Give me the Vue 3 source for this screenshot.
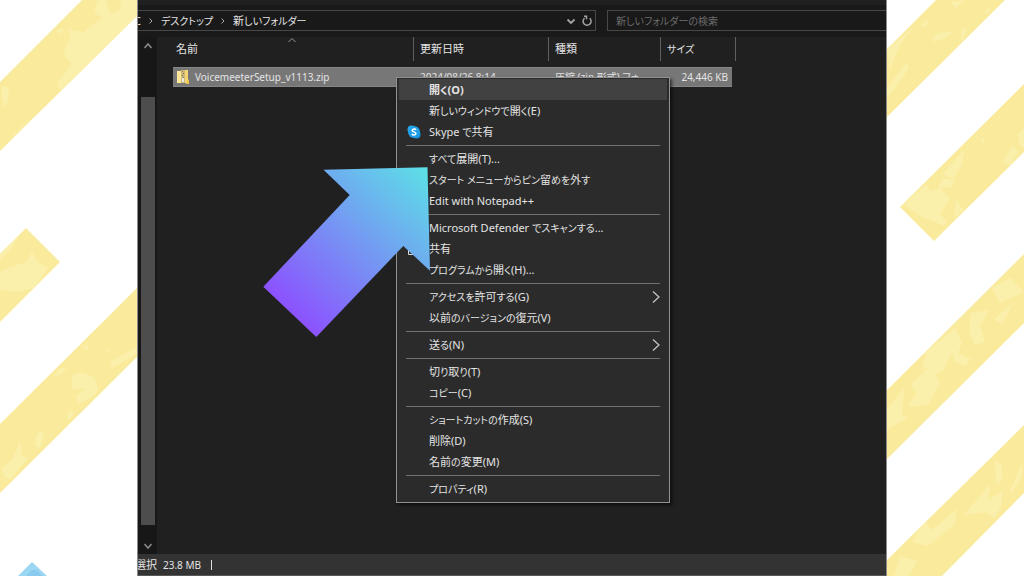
<script setup>
const crumbs = ['デスクトップ', '新しいフォルダー']
const groups = [
  [
    { label: '開く(O)', active: true },
    { label: '新しいウィンドウで開く(E)' },
    { label: 'Skype で共有', icon: 'skype' }
  ],
  [
    { label: 'すべて展開(T)...' },
    { label: 'スタート メニューからピン留めを外す' },
    { label: 'Edit with Notepad++' }
  ],
  [
    { label: 'Microsoft Defender でスキャンする...' },
    { label: '共有', icon: 'share' },
    { label: 'プログラムから開く(H)...' }
  ],
  [
    { label: 'アクセスを許可する(G)', sub: true },
    { label: '以前のバージョンの復元(V)' }
  ],
  [{ label: '送る(N)', sub: true }],
  [{ label: '切り取り(T)' }, { label: 'コピー(C)' }],
  [
    { label: 'ショートカットの作成(S)' },
    { label: '削除(D)' },
    { label: '名前の変更(M)' }
  ],
  [{ label: 'プロパティ(R)' }]
]

// Kana is set one size smaller than kanji and Latin, so labels are cut into runs.
const runs = (text) =>
  text.split(/([\u3040-\u30ff]+)/).filter(Boolean).map((t) => ({ t, kana: /^[\u3040-\u30ff]/.test(t) }))
</script>

<template>
  <div class="stage">
    <svg class="backdrop" viewBox="0 0 1024 576" preserveAspectRatio="none" aria-hidden="true">
      <defs>
        <clipPath id="stripes">
          <path d="M82 0H138V15L0 151V82Z M0 254L26 228L60 262L0 322Z M0 424L138 287V356L0 493Z" />
          <path d="M886 50L936 0H1005L886 118Z M900 207L1024 84V152L934 241Z M1024 254L886 391V460L1024 323Z M886 561L1024 425V493L942 576H886Z" />
        </clipPath>
      </defs>
      <g clip-path="url(#stripes)">
        <rect width="1024" height="576" fill="#f9eb9b" />
        <g fill="#fbefac">
          <path d="M98 0L94 12L102 18L92 25L84 32L72 30L68 27L70 38L64 50L66 58L72 64L64 75L57 82L60 90L76 78L138 18V0H121L120 10L110 14L106 0Z" />
          <path d="M2 86Q9 86 9 94Q9 103 4 107L2 96Z M55 31L63 28L62 34Z M14 134L34 116L24 130L10 142Z" />
          <path d="M7 268L26 262L32 252L38 262L48 268L34 288L18 292L0 290V272Z M0 252L20 236L10 250L0 260Z" />
          <path d="M72 376Q80 368 94 378Q102 390 92 397L78 404L76 396L86 388L72 390Z M54 376L60 368L67 368L58 376Z M105 350L111 348L108 352Z M110 362L138 346V353L112 368Z M82 344L90 347L86 351Z" />
          <path d="M2 468L12 460L20 441L22 456L28 458L10 480L4 476Z M36 438L40 430L44 435L40 448L35 446Z M70 410L74 414L69 420L67 416Z" />
          <path d="M887 50L913 27L900 45L890 70Z M887 88L907 62L909 68L898 84L886 99Z M920 28L925 20L930 21L926 26Z M932 38Q944 30 952 32Q948 38 934 42Z M950 2L964 0L956 8Z M962 28L967 30L961 43Z M984 12L991 7L988 14Z" />
          <path d="M904 205L926 184L930 191L938 189L942 178L955 180L952 187L940 188L950 199L940 214L947 221L944 226L930 220L920 216Z M943 174L964 150L962 165L953 179Z M980 138L986 140L983 144Z M1003 162L1013 145L1018 152L1010 166Z M1018 134L1024 128V148L1019 145Z M956 200L964 211L954 219Z" />
          <path d="M992 288L1010 278L1024 292L1000 303Z M970 313L989 310L980 326L985 342L975 345L970 334Z M994 319L1013 303L1002 324Z M926 352L955 328L962 343L958 353L971 359L965 366L955 362L952 352L944 370L936 374L940 383L928 405L907 407L916 394L911 384L929 367L922 370Z M886 410L904 388L902 414L908 418L886 430Z" />
          <path d="M995 460L1001 464L1003 480L996 484Z M1010 492L1022 462V477L1011 494Z M964 515L990 484L988 500L1003 491L1001 507L994 518L986 512Z M912 542L924 520L932 530L957 509L955 524L928 546Z M894 576L900 556L917 561L909 576Z" />
        </g>
      </g>
      <path d="M32 562L47 576H18Z" fill="#9bd6f3" />
      <path d="M32 570L37 570L42 576H26Z" fill="#88cbee" />
    </svg>

    <main class="window">
      <div class="topbar">
        <nav class="address" aria-label="アドレス">
          <span class="edge">C</span>
          <template v-for="c in crumbs" :key="c">
            <svg class="sep" viewBox="0 0 6 8" aria-hidden="true"><path d="M1.500 1.500L4 4L1.500 6.500" /></svg>
            <button class="crumb"><span v-for="(r, k) in runs(c)" :key="k" :class="{ kana: r.kana }">{{ r.t }}</span></button>
          </template>
          <button class="tool push" aria-label="履歴">
            <svg viewBox="0 0 12 12"><path d="M2.500 4.500L6 8L9.500 4.500" stroke-width="1.800" /></svg>
          </button>
          <button class="tool" aria-label="更新">
            <svg viewBox="0 0 12 12"><path d="M3.500 3.200A4 4 0 1 0 8.700 3.200M3 1.200H5.500V4.200" stroke-width="1.500" /></svg>
          </button>
        </nav>
        <input class="search" type="search" aria-label="検索" placeholder="新しいフォルダーの検索" />
      </div>

      <div class="body">
        <div class="rail">
          <svg viewBox="0 0 10 8" aria-hidden="true"><path d="M1.500 6L5 2L8.500 6" /></svg>
          <div class="thumb"></div>
          <svg viewBox="0 0 10 8" aria-hidden="true"><path d="M1.500 2L5 6L8.500 2" /></svg>
        </div>
        <div class="files">
          <table>
            <colgroup><col class="c1" /><col class="c2" /><col class="c3" /><col class="c4" /></colgroup>
            <thead>
              <tr>
                <th>名前
                  <svg class="sort" viewBox="0 0 10 6" aria-hidden="true"><path d="M1.500 5L5 1.500L8.500 5" /></svg>
                </th>
                <th>更新日時</th>
                <th>種類</th>
                <th><span class="kana">サイズ</span></th>
              </tr>
            </thead>
            <tbody>
              <tr>
                <td>
                  <span class="file">
                    <svg viewBox="0 0 12 14" aria-hidden="true">
                      <path d="M0 1H5L6 0H11V13H0Z" fill="#f3d673" />
                      <path d="M0 1H4V13H0Z" fill="#ffe998" />
                      <path d="M11 9L12 10V14H9Z" fill="#eec54f" />
                      <path d="M4 0H8V13H4Z" fill="#cdb876" />
                      <path d="M5 1H6V2H5ZM6 3H7V4H6ZM5 5H6V6H5ZM6 7H7V8H6Z" fill="#777" />
                      <path d="M5 8H7V12H5Z" fill="#e6e6e6" />
                    </svg>
                    VoicemeeterSetup_v1113.zip
                  </span>
                </td>
                <td>2024/08/26 8:14</td>
                <td>圧縮 (zip 形式) フォ</td>
                <td class="size">24,446 KB</td>
              </tr>
            </tbody>
          </table>
        </div>
      </div>

      <footer class="status">
        <span class="picked">選択</span>
        <span class="bytes">23.8 MB</span>
        <i class="bar"></i>
      </footer>

      <div class="menu" role="menu">
        <div v-for="(g, i) in groups" :key="i" class="group" role="group">
          <button v-for="m in g" :key="m.label" class="item" :class="{ active: m.active }" role="menuitem">
            <span class="icon">
              <svg v-if="m.icon === 'skype'" viewBox="0 0 14 14" aria-hidden="true">
                <circle cx="4.500" cy="4.500" r="4" fill="#28a8ea" />
                <circle cx="9.500" cy="9.500" r="4" fill="#1593e4" />
                <circle cx="7" cy="7" r="6" fill="#1e9fe8" />
                <path d="M9 4.800C8.300 3.700 5.200 3.700 5.200 5.500C5.200 7.200 8.900 6.600 8.900 8.500C8.900 10.300 5.700 10.300 4.900 9" fill="none" stroke="#fff" stroke-width="1.500" />
              </svg>
              <svg v-else-if="m.icon === 'share'" viewBox="0 0 14 14" aria-hidden="true">
                <path d="M4 4H1.500V12.500H11V9M4 9C5 6 7 5 9 5V2L13 6L9 9.500V7" fill="none" stroke="#ddd" />
              </svg>
            </span>
            <span class="label"><span v-for="(r, k) in runs(m.label)" :key="k" :class="{ kana: r.kana }">{{ r.t }}</span></span>
            <svg v-if="m.sub" class="more" viewBox="0 0 8 14" aria-hidden="true"><path d="M1 1.500L7 7L1 12.500" /></svg>
          </button>
        </div>
      </div>

      <svg class="arrow" viewBox="0 0 167 170" aria-hidden="true">
        <defs>
          <linearGradient id="sweep" gradientUnits="userSpaceOnUse" x1="27" y1="145" x2="165" y2="0">
            <stop offset="0" stop-color="#8c52ff" />
            <stop offset="1" stop-color="#5ce1e6" />
          </linearGradient>
        </defs>
        <path d="M164.500 .3L60.500 2.700L86.700 28L.3 119.700L53.300 170L140.300 79L167 103.700Z" fill="url(#sweep)" />
      </svg>
    </main>
  </div>
</template>

<style>
body { margin: 0; background: #fff; }
</style>

<style scoped>
* { box-sizing: border-box; }
.stage {
  position: relative;
  min-height: 100vh;
  display: grid;
  grid-template-columns: 137fr 750fr 137fr;
  overflow: hidden;
  font: 11px/20px "Noto Sans", "Noto Sans CJK JP", sans-serif;
  font-feature-settings: "palt";
  color: #e4e4e4;
}
button, input { font: inherit; font-feature-settings: inherit; color: inherit; border: 0; background: none; padding: 0; margin: 0; }
svg { display: block; }
.kana { font-size: 10px; }
.backdrop { position: absolute; inset: 0; width: 100%; height: 100%; }
.window {
  position: relative;
  grid-column: 2;
  display: flex;
  flex-direction: column;
  min-width: 0;
  background: #202020;
  border: solid #8c8c8c;
  border-width: 0 1px;
}
.topbar {
  display: grid;
  grid-template-columns: 458fr 279fr;
  gap: 11px;
  height: 37px;
  padding: 5px 0 6px;
  border-top: 5px solid #202020;
  background: #191919;
}
.address {
  min-width: 0;
  display: flex;
  align-items: center;
  border: solid #484848;
  border-width: 1px 1px 1px 0;
  height: 21px;
  white-space: nowrap;
}
.edge { display: flex; justify-content: flex-end; width: 3px; overflow: hidden; }
.crumb { line-height: 19px; }
.sep { width: 6px; height: 8px; margin: 0 7px; }
.sep path { fill: none; stroke: #aaa; }
.tool { width: 16px; }
.tool svg { width: 12px; height: 12px; margin: 0 auto; }
.tool path { fill: none; stroke: #a4a4a4; }
.push { margin-left: auto; }
.search {
  width: 100%;
  min-width: 0;
  height: 21px;
  padding: 0 8px;
  font-size: 10px;
  border: solid #484848;
  border-width: 1px 0 1px 1px;
  border-radius: 0;
}
.search::placeholder { color: #6c6c6c; opacity: 1; }
.body { flex: 1; display: flex; }
.rail {
  width: 19px;
  display: flex;
  flex-direction: column;
  align-items: center;
  padding: 5px 0 4px;
  background: #171717;
}
.rail svg { width: 10px; height: 8px; }
.rail path { fill: none; stroke: #8a8a8a; stroke-width: 1.5; }
.thumb { flex: 1; width: 14px; margin: 47px 0 17px; background: #4d4d4d; }
.files { flex: 1; min-width: 0; padding-left: 16px; }
table { table-layout: fixed; width: 563px; border-collapse: separate; border-spacing: 0; }
.c1 { width: 241px; }
.c2 { width: 135px; }
.c3 { width: 112px; }
.c4 { width: 75px; }
th {
  position: relative;
  height: 24px;
  padding: 0 3px 0 6px;
  border-right: 1px solid #606060;
  font-weight: 400;
  text-align: left;
}
th:first-child { padding-left: 3px; }
.sort { position: absolute; left: 114px; top: 0; width: 10px; height: 6px; }
.sort path { fill: none; stroke: #999; }
tbody::before { content: ""; display: block; height: 6px; }
td {
  height: 20px;
  padding: 0 0 0 6px;
  font-size: 10px;
  line-height: 18px;
  background: #777;
  box-shadow: inset 0 1px #868686, inset 0 -1px #868686;
  white-space: nowrap;
  overflow: hidden;
}
td:first-child { padding-left: 4px; }
td.size { text-align: right; padding-right: 4px; border-right: 4px solid #202020; }
.file { display: flex; align-items: center; gap: 6px; }
.file svg { width: 12px; height: 14px; }
.status {
  display: flex;
  align-items: center;
  gap: 6px;
  height: 22px;
  background: #333;
  border-bottom: 1px solid #585858;
}
.picked { display: flex; justify-content: flex-end; width: 19px; overflow: hidden; white-space: nowrap; }
.bytes { font-size: 10px; }
.bar { width: 1px; height: 10px; margin-left: 4px; background: #ddd; }
.menu {
  position: absolute;
  left: 258px;
  top: 77px;
  width: 274px;
  padding: 1px 2px 3px;
  background: #2b2b2b;
  border: 1px solid #929292;
  box-shadow: 2px 2px 3px rgba(0, 0, 0, .6);
}
.group + .group::before {
  content: "";
  display: block;
  height: 1px;
  margin: 3px 7px 2px;
  background: #707070;
}
.item {
  display: flex;
  align-items: center;
  width: 100%;
  height: 21px;
  padding-right: 7px;
  text-align: left;
  white-space: nowrap;
}
.label { white-space: pre; }
.active { background: #414141; font-weight: 700; }
.icon { width: 30px; padding-left: 8px; }
.icon svg { width: 14px; height: 14px; }
.more { width: 8px; height: 14px; margin-left: auto; }
.more path { fill: none; stroke: #c8c8c8; stroke-width: 1.2; }
.arrow { position: absolute; left: 125px; top: 167px; width: 167px; height: 170px; }
</style>
